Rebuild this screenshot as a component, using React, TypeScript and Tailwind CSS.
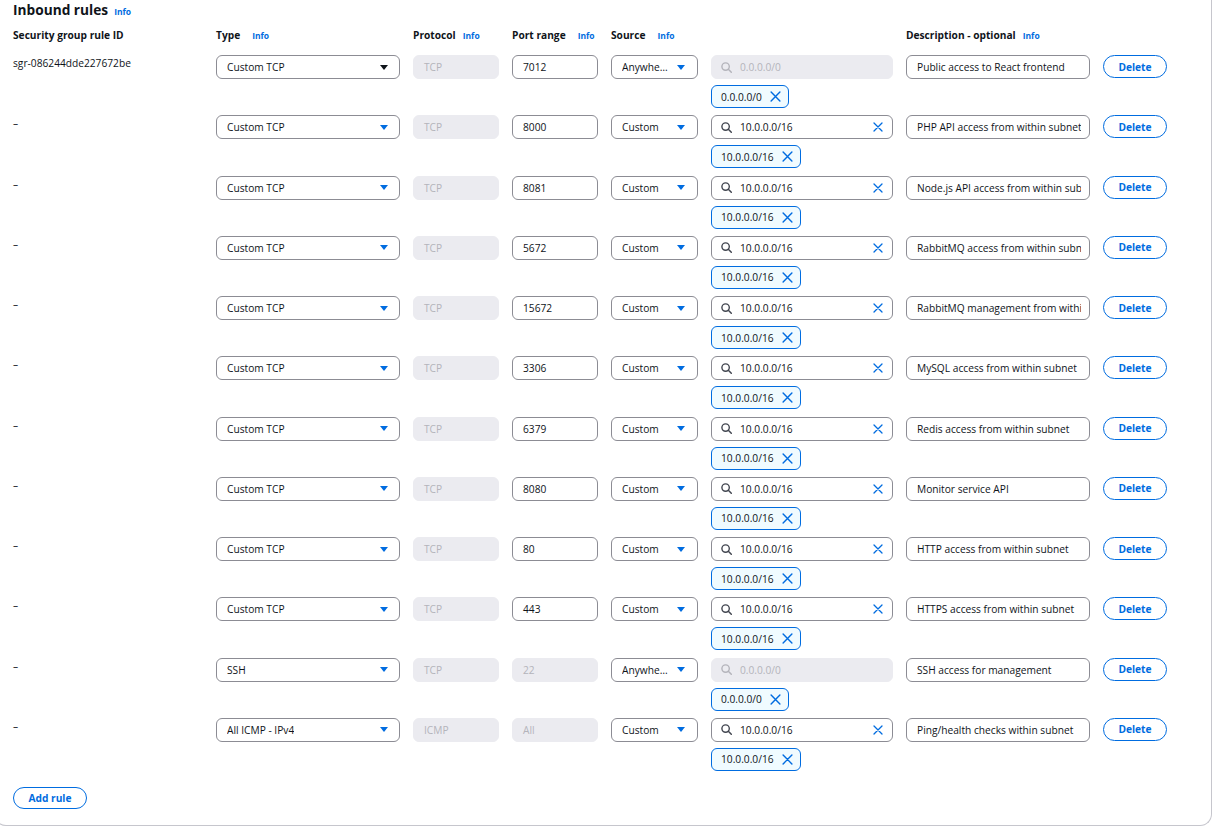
import React from 'react';

type Rule = {
  id: string;
  type: string;
  proto: string;
  port: string;
  portDisabled?: boolean;
  anywhere?: boolean;
  cidr: string;
  desc: string;
  darkArrow?: boolean;
};

const rules: Rule[] = [
  { id: 'sgr-086244dde227672be', type: 'Custom TCP', proto: 'TCP', port: '7012', anywhere: true, cidr: '0.0.0.0/0', desc: 'Public access to React frontend', darkArrow: true },
  { id: '–', type: 'Custom TCP', proto: 'TCP', port: '8000', cidr: '10.0.0.0/16', desc: 'PHP API access from within subnet' },
  { id: '–', type: 'Custom TCP', proto: 'TCP', port: '8081', cidr: '10.0.0.0/16', desc: 'Node.js API access from within subnet' },
  { id: '–', type: 'Custom TCP', proto: 'TCP', port: '5672', cidr: '10.0.0.0/16', desc: 'RabbitMQ access from within subnet' },
  { id: '–', type: 'Custom TCP', proto: 'TCP', port: '15672', cidr: '10.0.0.0/16', desc: 'RabbitMQ management from within subnet' },
  { id: '–', type: 'Custom TCP', proto: 'TCP', port: '3306', cidr: '10.0.0.0/16', desc: 'MySQL access from within subnet' },
  { id: '–', type: 'Custom TCP', proto: 'TCP', port: '6379', cidr: '10.0.0.0/16', desc: 'Redis access from within subnet' },
  { id: '–', type: 'Custom TCP', proto: 'TCP', port: '8080', cidr: '10.0.0.0/16', desc: 'Monitor service API' },
  { id: '–', type: 'Custom TCP', proto: 'TCP', port: '80', cidr: '10.0.0.0/16', desc: 'HTTP access from within subnet' },
  { id: '–', type: 'Custom TCP', proto: 'TCP', port: '443', cidr: '10.0.0.0/16', desc: 'HTTPS access from within subnet' },
  { id: '–', type: 'SSH', proto: 'TCP', port: '22', portDisabled: true, anywhere: true, cidr: '0.0.0.0/0', desc: 'SSH access for management' },
  { id: '–', type: 'All ICMP - IPv4', proto: 'ICMP', port: 'All', portDisabled: true, cidr: '10.0.0.0/16', desc: 'Ping/health checks within subnet' },
];

const GRID =
  'grid grid-cols-[190px_184px_86px_86px_87px_182px_184px_64px] gap-x-[13px]';

function Arrow({ dark }: { dark?: boolean }) {
  return (
    <svg width="8" height="5" viewBox="0 0 8 5" className="shrink-0">
      <path d="M0 0H8L4 5Z" fill={dark ? '#0f141a' : '#006ce0'} />
    </svg>
  );
}

function Search({ color }: { color: string }) {
  return (
    <svg width="11" height="11" viewBox="0 0 11 11" className="shrink-0" fill="none">
      <circle cx="4.6" cy="4.6" r="3.7" stroke={color} strokeWidth="1.4" />
      <path d="M7.3 7.3L10.3 10.3" stroke={color} strokeWidth="1.5" strokeLinecap="round" />
    </svg>
  );
}

function XIcon({ size }: { size: number }) {
  return (
    <svg width={size} height={size} viewBox="0 0 10 10" className="shrink-0" fill="none">
      <path d="M1 1L9 9M9 1L1 9" stroke="#006ce0" strokeWidth="1.3" strokeLinecap="round" />
    </svg>
  );
}

function Info({ cls }: { cls: string }) {
  return <span className={`text-[8.5px] font-bold text-[#006ce0] ${cls}`}>Info</span>;
}

function Row({ r }: { r: Rule }) {
  return (
    <div className={GRID}>
      <div className="h-[14px] leading-[14px] pt-[1px] text-[#0f141a]">{r.id}</div>
      <div className="flex h-[24px] items-center justify-between rounded-[6px] border border-[#8c8c94] bg-white pl-[10px] pr-[11px]">
        <span className="truncate">{r.type}</span>
        <Arrow dark={r.darkArrow} />
      </div>
      <div className="flex h-[24px] items-center rounded-[6px] border border-[#ebebf0] bg-[#ebebf0] pl-[10px] text-[#b4b4bb]">
        {r.proto}
      </div>
      {r.portDisabled ? (
        <div className="flex h-[24px] items-center rounded-[6px] border border-[#ebebf0] bg-[#ebebf0] pl-[10px] text-[#b4b4bb]">
          {r.port}
        </div>
      ) : (
        <div className="flex h-[24px] items-center rounded-[6px] border border-[#8c8c94] bg-white pl-[10px]">
          {r.port}
        </div>
      )}
      <div className="flex h-[24px] items-center justify-between rounded-[6px] border border-[#8c8c94] bg-white pl-[10px] pr-[12px]">
        <span className="min-w-0 truncate pr-[6px]">{r.anywhere ? 'Anywhere-IPv4' : 'Custom'}</span>
        <Arrow />
      </div>
      <div className="flex flex-col gap-[6px]">
        {r.anywhere ? (
          <div className="flex h-[24px] items-center rounded-[6px] border border-[#ebebf0] bg-[#ebebf0] pl-[9px] pr-[9px] text-[#b4b4bb]">
            <Search color="#b4b4bb" />
            <span className="ml-[8px]">0.0.0.0/0</span>
          </div>
        ) : (
          <div className="flex h-[24px] items-center rounded-[6px] border border-[#8c8c94] bg-white pl-[9px] pr-[9px]">
            <Search color="#424650" />
            <span className="ml-[8px]">{r.cidr}</span>
            <span className="ml-auto">
              <XIcon size={10} />
            </span>
          </div>
        )}
        <div className="flex">
          <div className="flex h-[23px] items-center gap-[8px] rounded-[6px] border border-[#006ce0] bg-[#f0fbff] pl-[9px] pr-[7px]">
            <span>{r.cidr}</span>
            <XIcon size={11} />
          </div>
        </div>
      </div>
      <div className="flex h-[24px] items-center rounded-[6px] border border-[#8c8c94] bg-white pl-[10px] pr-[8px]">
        <span className="block min-w-0 flex-1 overflow-hidden whitespace-nowrap">{r.desc}</span>
      </div>
      <div className="flex h-[23px] items-center justify-center rounded-full border-[1.5px] border-[#006ce0] font-bold text-[#006ce0]">
        Delete
      </div>
    </div>
  );
}

export default function App() {
  return (
    <div className="w-[1221px] overflow-hidden bg-white font-['Open_Sans',sans-serif] text-[10.2px] text-[#0f141a]">
      <div className="ml-[-6px] w-[1218px] rounded-b-[12px] border border-t-0 border-[#c6c6cd] pb-[16px] pl-[18px]">
        <div className="flex items-baseline pt-[1px] leading-[18px]">
          <span className="text-[13.7px] font-bold">Inbound rules</span>
          <Info cls="ml-[6px]" />
        </div>
        <div className={`${GRID} mt-[7px] h-[14px] items-baseline leading-[14px] font-bold`}>
          <div>Security group rule ID</div>
          <div className="flex items-baseline">
            <span>Type</span>
            <Info cls="ml-[12px]" />
          </div>
          <div className="flex items-baseline">
            <span>Protocol</span>
            <Info cls="ml-[7px]" />
          </div>
          <div className="flex items-baseline">
            <span>Port range</span>
            <Info cls="ml-[12px]" />
          </div>
          <div className="flex items-baseline">
            <span>Source</span>
            <Info cls="ml-[12px]" />
          </div>
          <div />
          <div className="flex items-baseline">
            <span>Description - optional</span>
            <Info cls="ml-[7px]" />
          </div>
          <div />
        </div>
        <div className="mt-[13px] flex flex-col gap-[7.27px] leading-[14px]">
          {rules.map((r, i) => (
            <Row key={i} r={r} />
          ))}
        </div>
        <div className="mt-[16px] flex h-[22px] w-[74px] items-center justify-center rounded-full border-[1.5px] border-[#006ce0] font-bold leading-[14px] text-[#006ce0]">
          Add rule
        </div>
      </div>
    </div>
  );
}
